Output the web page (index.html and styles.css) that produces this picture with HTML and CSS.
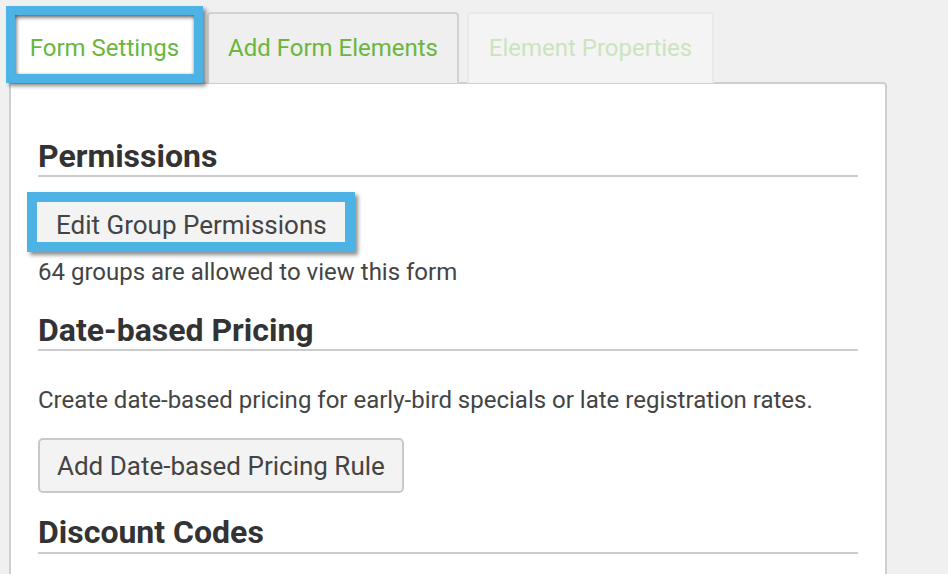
FILE: index.html
```html
<!DOCTYPE html>
<html lang="en">
<head>
  <meta charset="UTF-8">
  <meta name="viewport" content="width=device-width, initial-scale=1">
  <title>Form Settings</title>
  <link rel="stylesheet" href="styles.css">
</head>
<body>
  <div class="tabs">
    <div class="tab tab-active callout">Form Settings</div>
    <div class="tab tab-second">Add Form Elements</div>
    <div class="tab tab-disabled">Element Properties</div>
  </div>

  <div class="panel">
    <h2 class="section-title">Permissions</h2>
    <div class="callout callout-button">
      <button class="btn btn-flat">Edit Group Permissions</button>
    </div>
    <p class="note">64 groups are allowed to view this form</p>

    <h2 class="section-title title-date">Date-based Pricing</h2>
    <p class="desc">Create date-based pricing for early-bird specials or late registration rates.</p>
    <button class="btn">Add Date-based Pricing Rule</button>

    <h2 class="section-title title-discount">Discount Codes</h2>
  </div>
</body>
</html>
```

FILE: styles.css
```css
body {
  font-family: Roboto, "Open Sans", sans-serif;
  background-color: #f0f0f0;
  margin: 0;
  padding: 0;
  color: #444;
}

/* tabs */
.tabs {
  display: flex;
  align-items: flex-end;
  padding: 6px 0 0 6px;
}

.tab {
  box-sizing: border-box;
  font-size: 24px;
  line-height: 30px;
  text-align: center;
  color: #6ab63e;
  border: 2px solid #d2d2d2;
  border-bottom: none;
  border-radius: 4px 4px 0 0;
  white-space: nowrap;
}

.tab-active {
  width: 197px;
  height: 77px;
  padding-top: 18px;
  background-color: #fff;
}

.tab-second {
  width: 252px;
  height: 71px;
  margin-left: 4px;
  padding-top: 19px;
  background-color: #efefef;
}

.tab-disabled {
  width: 247px;
  height: 71px;
  margin-left: 8px;
  padding-top: 19px;
  background-color: #f4f4f4;
  border-color: #e9e9e9;
  color: #cbe4bd;
}

/* blue highlight boxes */
.callout {
  border: 9px solid #4cb3e4;
  border-radius: 0;
  box-shadow: inset 1px 2px 4px rgba(0, 0, 0, 0.7), 3px 3px 4px rgba(0, 0, 0, 0.45);
  position: relative;
  z-index: 1;
}

.callout-button {
  display: inline-block;
  border-width: 10px;
  margin: 15px 0 0 -11px;
}

/* panel */
.panel {
  width: 878px;
  box-sizing: border-box;
  margin: -1px 0 0 9px;
  padding: 54px 27px 40px 27px;
  background-color: #fff;
  border: 2px solid #cfcfcf;
  border-radius: 0 4px 0 0;
  min-height: 520px;
}

.section-title {
  margin: 0;
  font-size: 32px;
  line-height: 36px;
  font-weight: 700;
  color: #333;
  padding-bottom: 1px;
  border-bottom: 2px solid #cccccc;
}

.title-date {
  margin-top: 26px;
}

.title-discount {
  margin-top: 21px;
  padding-bottom: 2px;
}

.note {
  margin: 6px 0 0;
  font-size: 24px;
  line-height: 28px;
}

.desc {
  margin: 35px 0 24px;
  font-size: 24px;
  line-height: 28px;
}

.btn {
  display: block;
  font-family: Roboto, "Open Sans", sans-serif;
  font-size: 26px;
  color: #444;
  background-color: #f3f3f3;
  border: 2px solid #c9c9c9;
  border-radius: 5px;
  height: 55px;
  padding: 0 17px;
  cursor: pointer;
}

.btn-flat {
  height: 40px;
  border: none;
  border-radius: 0;
  padding: 6px 18px 0 19px;
}
```
